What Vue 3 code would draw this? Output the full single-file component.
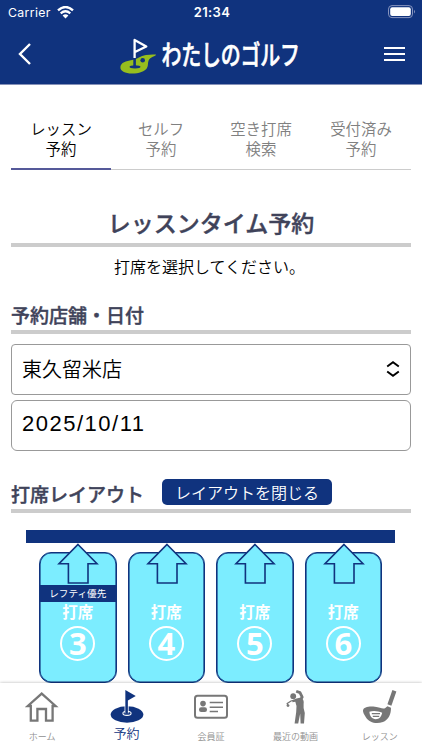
<script setup>
import { ref } from "vue";

const activeTab = ref(0);
const tabs = [
  ["レッスン", "予約"],
  ["セルフ", "予約"],
  ["空き打席", "検索"],
  ["受付済み", "予約"],
];
const shop = ref("東久留米店");
const date = ref("2025/10/11");
const layoutShow = ref(true);
const seats = [
  { no: 3, lefty: true },
  { no: 4, lefty: false },
  { no: 5, lefty: false },
  { no: 6, lefty: false },
];

function toggleLayout() {
  layoutShow.value = !layoutShow.value;
}
</script>

<template>
  <div class="app">
    <header class="header">
      <div class="status">
        <div class="carrier">
          <span>Carrier</span>
          <svg width="17" height="13" viewBox="0 0 17 13">
            <path d="M1 4.3 Q8.5 -2.2 16 4.3" fill="none" stroke="#fff" stroke-width="2.4" />
            <path d="M3.7 7.3 Q8.5 3.2 13.3 7.3" fill="none" stroke="#fff" stroke-width="2.2" />
            <path d="M5.6 9.4 Q8.5 7 11.4 9.4 L8.5 12.4 Z" fill="#fff" />
          </svg>
        </div>
        <div class="time">21:34</div>
        <svg class="battery" width="28" height="14" viewBox="0 0 28 14">
          <rect x="0.5" y="0.6" width="24" height="12" rx="3.5" fill="none" stroke="#8794be" />
          <rect x="2.2" y="2.3" width="20.6" height="8.6" rx="2" fill="#fff" />
          <path d="M26 4.7 Q28 6.6 26 8.5Z" fill="#8794be" />
        </svg>
      </div>
      <div class="nav">
        <svg class="back" width="14" height="22" viewBox="0 0 14 22">
          <path d="M12 1 L2 11 L12 21" fill="none" stroke="#fff" stroke-width="2.4" />
        </svg>
        <svg class="logo" width="182" height="40" viewBox="0 0 182 40">
          <path d="M0.4 33 C0.8 28.5 6 27 12 26 C18 25 20 22 26 21 C30 20.3 34 20.3 36 20.6 C36 22.5 30 23 28.6 26.5 C27.6 29 28.5 31 27 34 C25 37.5 19 39.5 12 39.5 C5 39.5 0 37 0.4 33Z" fill="#96be1e" />
          <circle cx="22.7" cy="26.3" r="2.3" fill="#10337e" />
          <ellipse cx="15" cy="32.8" rx="5.5" ry="1.6" fill="#10337e" />
          <path d="M14.6 23 V32" stroke="#10337e" stroke-width="2.6" />
          <path d="M14.6 24 V6 L26.3 12.5 L15 18" fill="none" stroke="#fff" stroke-width="2.3" stroke-linejoin="round" />
          <g transform="translate(41.5 31) scale(0.8 1.08)">
            <text class="logo-text" x="0" y="0" textLength="173" lengthAdjust="spacing">わたしのゴルフ</text>
          </g>
        </svg>
        <div class="menu"><i></i><i></i><i></i></div>
      </div>
    </header>

    <main class="main">
      <div class="tabs">
        <div
          v-for="(tab, i) in tabs"
          :key="i"
          class="tab"
          :class="{ active: activeTab === i }"
          @click="activeTab = i"
        >
          {{ tab[0] }}<br />{{ tab[1] }}
        </div>
      </div>

      <h1 class="title">レッスンタイム予約</h1>
      <p class="lead">打席を選択してください。</p>

      <h2 class="subtitle">予約店舗・日付</h2>
      <div class="field shop">
        <span>{{ shop }}</span>
        <svg width="14" height="16" viewBox="0 0 14 16">
          <path d="M1.2 5.6 L7 1.2 L12.8 5.6 M1.2 10.4 L7 14.8 L12.8 10.4" fill="none" stroke="#000" stroke-width="1.9" />
        </svg>
      </div>
      <div class="field date">{{ date }}</div>

      <div class="layout-head">
        <h2>打席レイアウト</h2>
        <button @click="toggleLayout">レイアウトを閉じる</button>
      </div>
      <div class="layout" v-show="layoutShow">
        <div class="net"></div>
        <div class="seats">
          <div v-for="seat in seats" :key="seat.no" class="seat">
            <svg class="arrow" width="42" height="41" viewBox="0 0 42 41">
              <path d="M21 1.5 L40 20.8 H31 V40 H11.4 V20.8 H2 Z" fill="#7cedff" stroke="#10337e" stroke-width="1.6" />
            </svg>
            <div class="lefty" v-if="seat.lefty">レフティ優先</div>
            <div class="seat-name">打席</div>
            <div class="seat-no">{{ seat.no }}</div>
          </div>
        </div>
      </div>
    </main>

    <footer class="footer">
      <div class="item">
        <svg width="34" height="35" viewBox="0 0 34 35">
          <path d="M5.8 17 V31.6 H12.4 V20 H21 V31.6 H27.6 V17 H30.6 L16.7 4.6 L2.8 17 Z" fill="none" stroke="#777" stroke-width="2.3" />
        </svg>
        <span>ホーム</span>
      </div>
      <div class="item on">
        <svg width="36" height="36" viewBox="0 0 36 36">
          <ellipse cx="18" cy="26.2" rx="16.8" ry="8.5" fill="#10337e" />
          <ellipse cx="18" cy="25" rx="4.2" ry="2.1" fill="none" stroke="#fff" stroke-width="1.1" />
          <path d="M17.6 17.5 V25" stroke="#fff" stroke-width="4.2" />
          <path d="M16.3 25.5 V1 L27 7.2 L18.9 11.8 V25.5Z" fill="#10337e" />
        </svg>
        <span>予約</span>
      </div>
      <div class="item">
        <svg width="36" height="36" viewBox="0 0 36 36">
          <rect x="2" y="6.8" width="32" height="22" rx="2.5" fill="none" stroke="#777" stroke-width="2" />
          <circle cx="10" cy="14.6" r="2.8" fill="#777" />
          <rect x="6" y="18.2" width="8" height="4.8" rx="2.2" fill="#777" />
          <path d="M16.7 13.5 H30 M16.7 18.2 H30 M16.7 22.6 H25" stroke="#777" stroke-width="1.5" />
        </svg>
        <span>会員証</span>
      </div>
      <div class="item">
        <svg width="24" height="36" viewBox="0 0 24 36">
          <circle cx="10.2" cy="7.2" r="2.9" fill="#777" />
          <path d="M13.2 2.2 L17 3.6 L19.2 8.2 L16.6 12" fill="none" stroke="#777" stroke-width="2.8" stroke-linejoin="round" />
          <path d="M13.5 9.5 L18 8.5 Q21.4 10.5 20.6 15 L20.6 19 L21.8 24 L21 34.4 H17.6 L17.2 24.5 L15.2 34.4 H11.6 L13.2 23 L13.5 17 L12.3 12.8 L9.5 13.2 L9.2 11.3 Z" fill="#777" />
          <path d="M11.5 11 L8 12 L4.2 14.4 L4.8 16" fill="none" stroke="#777" stroke-width="1.3" />
          <circle cx="5" cy="16.6" r="1.4" fill="#777" />
        </svg>
        <span>最近の動画</span>
      </div>
      <div class="item">
        <svg width="38" height="36" viewBox="0 0 38 36">
          <path d="M2 21.5 C2.5 18 8 17.2 14 17.8 C19 18.4 21.5 20.4 24 19.2 L26.4 17.2 L30 18.8 C30 25 28 30.5 22 33 C15 35.5 8 33.4 5 28.5 C3 25.5 1.8 23 2 21.5Z" fill="#777" />
          <path d="M8.4 22.8 C12 21.2 17 21.8 21.2 23.8 C20.6 27.6 18 30.2 14.8 30.2 C11 30.2 8.6 27 8.4 22.8Z" fill="#fff" />
          <path d="M10.8 24.6 H19 M11.8 27.4 H18.2" stroke="#777" stroke-width="1.2" />
          <path d="M28.4 16 L33.4 1.8" stroke="#777" stroke-width="4.2" />
        </svg>
        <span>レッスン</span>
      </div>
    </footer>
  </div>
</template>

<style>
body {
  margin: 0;
  overflow: hidden;
}
</style>

<style scoped>
.app {
  display: flex;
  flex-direction: column;
  width: 422px;
  height: 750px;
  overflow: hidden;
  background-color: #fff;
  color: #000;
  font-family: "Noto Sans CJK JP", sans-serif;
  font-weight: 350;
}
.header {
  flex: none;
  height: 85px;
  background-color: #10337e;
  border-bottom: 1px solid #8591b8;
  box-sizing: border-box;
  color: #fff;
}
.status {
  display: grid;
  grid-template-columns: 1fr auto 1fr;
  align-items: center;
  height: 24px;
  padding: 0 6px 0 8px;
  font-family: Inter, sans-serif;
}
.carrier {
  display: flex;
  align-items: center;
  gap: 6px;
  font-size: 12.3px;
  font-weight: 400;
  letter-spacing: 0.35px;
}
.time {
  font-size: 13px;
  font-weight: 600;
  letter-spacing: 0.4px;
}
.battery {
  justify-self: end;
}
.nav {
  display: flex;
  align-items: center;
  height: 60px;
  padding: 0 17px 0 18px;
}
.logo {
  margin-left: 88px;
  overflow: visible;
}
.logo-text {
  font-size: 25px;
  font-weight: 500;
  fill: #fff;
  stroke: #fff;
  stroke-width: 0.6px;
  stroke-linejoin: round;
}
.menu {
  display: flex;
  flex-direction: column;
  gap: 4px;
  margin-left: auto;
}
.menu i {
  width: 21px;
  height: 2px;
  background-color: #fff;
}
.main {
  flex: 1;
  min-height: 0;
  padding: 0 11px;
  overflow: hidden;
}
.tabs {
  display: flex;
  height: 85px;
}
.tab {
  flex: 1;
  padding-top: 34px;
  box-sizing: border-box;
  border-bottom: 1px solid #ccc;
  font-size: 15.4px;
  line-height: 19.5px;
  text-align: center;
  color: #808080;
}
.tab.active {
  color: #000;
  border-bottom: 2px solid #555999;
}
.title,
.subtitle,
.layout-head h2 {
  font-weight: 500;
  color: #40435a;
  -webkit-text-stroke: 0.4px #40435a;
}
.title {
  height: 43px;
  margin: 30px 0 0;
  border-bottom: 4px solid #ccc;
  line-height: 45px;
  font-size: 23px;
  text-align: center;
}
.lead {
  margin: 7px 0 0;
  padding-right: 3px;
  line-height: 25px;
  font-size: 16px;
  text-align: center;
}
.subtitle {
  height: 28px;
  margin: 23px 0 10px;
  border-bottom: 4px solid #ccc;
  line-height: 26px;
  font-size: 19px;
}
.field {
  display: flex;
  align-items: center;
  justify-content: space-between;
  height: 51px;
  padding: 0 10px 2px;
  box-sizing: border-box;
  border: 1px solid #999;
  border-radius: 4px;
  font-size: 20px;
}
.date {
  margin-top: 5px;
  padding-bottom: 4px;
  border-radius: 6px;
  font-family: "Liberation Sans", sans-serif;
  font-size: 22px;
  letter-spacing: 1.5px;
}
.layout-head {
  display: flex;
  align-items: flex-start;
  height: 30px;
  margin-top: 28px;
  border-bottom: 4px solid #ccc;
}
.layout-head h2 {
  width: 151px;
  margin: 2px 0 0;
  line-height: 26px;
  font-size: 19px;
}
.layout-head button {
  width: 170px;
  height: 26px;
  padding: 0;
  border: 0;
  border-radius: 5px;
  background-color: #10337e;
  color: #fff;
  font-family: inherit;
  font-size: 16px;
  font-weight: 350;
  line-height: 24px;
}
.layout {
  padding: 17px 16px 0 15px;
}
.net {
  height: 13px;
  background-color: #10337e;
}
.seats {
  display: flex;
  gap: 11px;
  padding: 9px 0 0 13px;
}
.seat {
  position: relative;
  display: flex;
  flex-direction: column;
  align-items: center;
  flex: none;
  width: 77.5px;
  height: 131px;
  padding-top: 49px;
  box-sizing: border-box;
  border: 1px solid #10337e;
  border-radius: 12px;
  background-color: #7cedff;
  box-shadow: inset 0 0 0 0.6px #10337e;
  color: #fff;
}
.arrow {
  position: absolute;
  top: -10px;
  left: 17px;
}
.lefty {
  position: absolute;
  top: 32px;
  left: 0;
  width: 100%;
  height: 17px;
  background-color: #10337e;
  font-size: 9.6px;
  font-weight: 400;
  line-height: 16px;
  text-align: center;
}
.seat-name {
  font-size: 15.5px;
  font-weight: 700;
  line-height: 18px;
}
.seat-no {
  width: 35px;
  height: 35px;
  margin-top: 6px;
  box-sizing: border-box;
  border: 2.5px solid #fff;
  border-radius: 50%;
  font-family: "Noto Sans", sans-serif;
  font-size: 31px;
  font-weight: 700;
  line-height: 30px;
  text-align: center;
}
.footer {
  display: flex;
  flex: none;
  height: 67px;
  box-sizing: border-box;
  padding-top: 6px;
  background-color: #fff;
  box-shadow: 0 0 3px rgba(0, 0, 0, 0.3);
  z-index: 1;
}
.item {
  flex: 1;
  display: flex;
  flex-direction: column;
  align-items: center;
  justify-content: space-between;
  height: 54px;
  font-size: 9px;
  line-height: 13px;
  color: #909090;
}
.item.on {
  height: 52px;
  font-size: 13px;
  line-height: 17px;
  color: #10337e;
}
</style>
